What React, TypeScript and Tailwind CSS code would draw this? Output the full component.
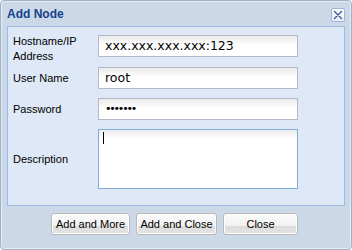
export default function App() {
  const label = "text-[11px] text-black font-['Liberation_Sans',Arial,sans-serif]";
  const field =
    "h-[22px] w-[200px] border border-[#b5b8c8] bg-[linear-gradient(#e9e9e9,#ffffff_9px)] px-[6px] text-[12.5px] leading-[20px] text-black font-['DejaVu_Sans',sans-serif]";
  const btn =
    "h-[22px] rounded-[3px] border border-[#b9b9b9] bg-[linear-gradient(#fbfbfb,#f1f1f1_60%,#dcdcdc_62%,#e4e4e4)] text-[11px] text-black font-['Liberation_Sans',Arial,sans-serif] shadow-[inset_0_0_0_1px_#ffffff]";

  return (
    <div className="w-[352px] h-[250px] bg-white">
      <div className="flex h-[250px] w-[352px] flex-col rounded-[4px] border border-[#a2afc1] bg-[#cbd8e8] shadow-[inset_0_0_0_1px_#e4ecf5]">
        {/* title bar */}
        <div className="flex h-[25px] items-center justify-between pl-[6px] pr-[6px]">
          <span className="pt-[1px] text-[12px] font-bold text-[#15428b] font-['Liberation_Sans',Arial,sans-serif]">
            Add Node
          </span>
          <div className="mt-[2px] flex h-[14px] w-[14px] items-center justify-center rounded-[2px] border border-[#9fb8da] bg-[linear-gradient(#ffffff,#e6eef8)]">
            <svg width="10" height="10" viewBox="0 0 10 10">
              <path d="M1.5 1.5 L8.5 8.5 M8.5 1.5 L1.5 8.5" stroke="#3b5a95" strokeWidth="1.4" strokeLinecap="round" />
            </svg>
          </div>
        </div>

        {/* form panel */}
        <div className="mx-[6px] h-[180px] border border-[#99bbe8] bg-[#dfe8f6] pl-[5px] pt-[8px]">
          <div className="flex">
            <div className={`${label} -mt-[1px] w-[85px] leading-[15px]`}>
              Hostname/IP
              <br />
              Address
            </div>
            <div className={field}>xxx.xxx.xxx.xxx:123</div>
          </div>

          <div className="mt-[3px] flex items-center">
            <div className={`${label} w-[85px]`}>User Name</div>
            <div className={field}>root</div>
          </div>

          <div className="mt-[9px] flex items-center">
            <div className={`${label} w-[85px]`}>Password</div>
            <div className={`${field} tracking-[-2.2px] !text-[11px]`}>•••••••</div>
          </div>

          <div className="mt-[9px] flex items-center">
            <div className={`${label} w-[85px]`}>Description</div>
            <div className="relative h-[60px] w-[200px] border border-[#7eadd9] bg-[linear-gradient(#ececec,#ffffff_9px)]">
              <div className="absolute left-[4px] top-[2px] h-[12px] w-[1px] bg-black" />
            </div>
          </div>
        </div>

        {/* buttons */}
        <div className="mt-[7px] flex justify-center gap-[6px] pr-[3px]">
          <button className={`${btn} w-[79px]`}>Add and More</button>
          <button className={`${btn} w-[81px]`}>Add and Close</button>
          <button className={`${btn} w-[75px]`}>Close</button>
        </div>
      </div>
    </div>
  );
}
